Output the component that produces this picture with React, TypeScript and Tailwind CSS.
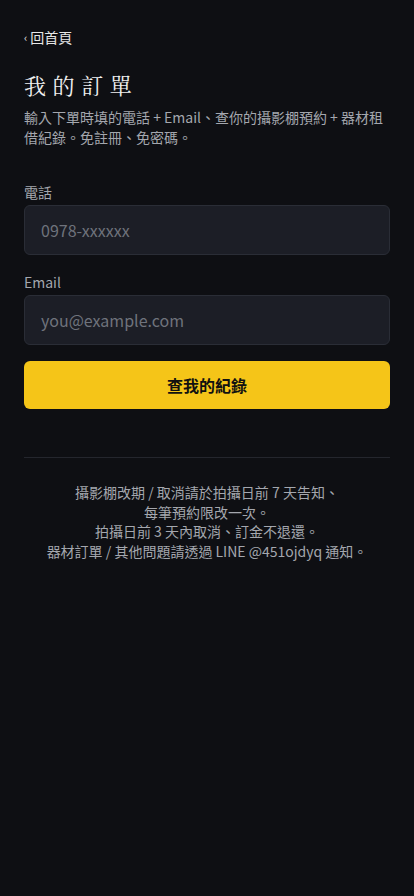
import React from "react";

export default function App() {
  const sans = { fontFamily: '"Noto Sans CJK TC", "Noto Sans", sans-serif' };
  return (
    <div className="min-h-[896px] w-full bg-[#0e0f13] text-white" style={sans}>
      <div className="px-6 pt-[26px]">
        <a className="flex items-center gap-[3px] text-[14px] leading-[22px] text-[#e6e6e6]">
          <span className="text-[11px]">‹</span>
          <span>回首頁</span>
        </a>
        <h1
          className="mt-[21px] text-[22px] leading-[32px] tracking-[0.3em] text-[#f0f0f0]"
          style={{ fontFamily: '"Noto Serif CJK TC", "Noto Serif CJK SC", serif' }}
        >
          我的訂單
        </h1>
        <p className="mt-[6px] text-[14px] leading-[20px] text-[#a4a7ae]">
          輸入下單時填的電話 + Email、查你的攝影棚預約 + 器材租借紀錄。免註冊、免密碼。
        </p>

        <div className="mt-[35px]">
          <label className="block text-[14px] leading-[20px] text-[#a4a7ae]">電話</label>
          <div className="mt-[3px] flex h-[50px] items-center rounded-[6px] border border-[#2a2d36] bg-[#1c1e26] px-4 text-[16px] text-[#6f737c]">
            0978-xxxxxx
          </div>
        </div>

        <div className="mt-[17px]">
          <label className="block text-[14px] leading-[20px] text-[#a4a7ae]">Email</label>
          <div className="mt-[3px] flex h-[50px] items-center rounded-[6px] border border-[#2a2d36] bg-[#1c1e26] px-4 text-[16px] text-[#6f737c]">
            you@example.com
          </div>
        </div>

        <button className="mt-[16px] flex h-[48px] w-full items-center justify-center rounded-[6px] bg-[#f5c518] text-[16px] font-bold text-[#111]">
          查我的紀錄
        </button>

        <div className="mt-[48px] h-px bg-[#24262d]" />

        <div className="mt-[25px] text-center text-[14px] leading-[19.5px] text-[#a4a7ae]">
          <p>攝影棚改期 / 取消請於拍攝日前 7 天告知、</p>
          <p>每筆預約限改一次。</p>
          <p>拍攝日前 3 天內取消、訂金不退還。</p>
          <p>器材訂單 / 其他問題請透過 LINE @451ojdyq 通知。</p>
        </div>
      </div>
    </div>
  );
}
